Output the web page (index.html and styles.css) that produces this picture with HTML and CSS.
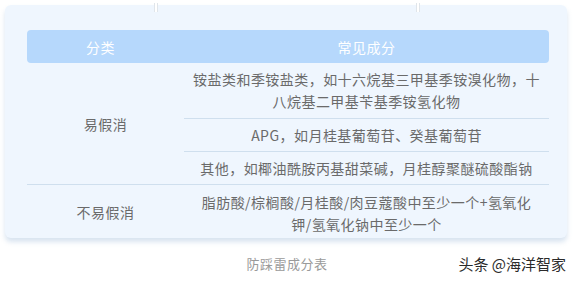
FILE: index.html
```html
<!DOCTYPE html>
<html lang="zh">
<head>
<meta charset="utf-8">
<link rel="stylesheet" href="styles.css">
</head>
<body>
<div class="page">
  <div class="card">
    <span class="pin pin-a"></span>
    <span class="pin pin-b"></span>
    <div class="head">
      <div class="hcell">分类</div>
      <div class="hcell">常见成分</div>
    </div>
    <div class="row">
      <div class="cat">易假消</div>
      <div class="items">
        <div class="item">铵盐类和季铵盐类，如十六烷基三甲基季铵溴化物，十<br>八烷基二甲基苄基季铵氢化物</div>
        <div class="item">APG，如月桂基葡萄苷、癸基葡萄苷</div>
        <div class="item">其他，如椰油酰胺丙基甜菜碱，月桂醇聚醚硫酸酯钠</div>
      </div>
    </div>
    <div class="row row-last">
      <div class="cat">不易假消</div>
      <div class="items">
        <div class="item item-b">脂肪酸/棕榈酸/月桂酸/肉豆蔻酸中至少一个+氢氧化<br>钾/氢氧化钠中至少一个</div>
      </div>
    </div>
  </div>
  <div class="caption">防踩雷成分表</div>
  <div class="mark">头条 @海洋智家</div>
</div>
</body>
</html>
```
FILE: styles.css
```css
html, body {
  margin: 0;
  padding: 0;
  background: #ffffff;
}
body {
  font-family: "Noto Sans CJK SC", "Noto Sans", sans-serif;
  color: #6a6a6a;
  font-size: 14px;
}
.page {
  position: relative;
  width: 574px;
  height: 281px;
  padding-top: 5px;
  box-sizing: border-box;
}
.card {
  position: relative;
  margin: 0 7px 0 5px;
  padding: 25px 18px 0 22px;
  background: #eff6fe;
  border-radius: 6px;
  box-shadow: 0 4px 5px rgba(170, 195, 222, 0.45);
}
.pin {
  position: absolute;
  top: -2px;
  width: 2px;
  height: 9px;
  border-left: 1px solid #e0e5ea;
  border-right: 1px solid #e0e5ea;
  background: #ffffff;
}
.pin-a { left: 149px; }
.pin-b { left: 411px; }
.head {
  display: grid;
  grid-template-columns: 157px 1fr;
  height: 33px;
  background: #b6d8fc;
  border-radius: 4px;
  color: #ffffff;
  align-items: center;
  text-align: center;
  font-size: 14px;
  letter-spacing: 0.5px;
}
.hcell:first-child { padding-right: 10px; }
.row {
  display: grid;
  grid-template-columns: 157px 1fr;
}
.row-last {
  border-top: 1px solid #cfdfee;
}
.cat {
  display: flex;
  align-items: center;
  justify-content: center;
  letter-spacing: 0.5px;
}
.items {
  display: flex;
  flex-direction: column;
}
.item {
  text-align: center;
  line-height: 22px;
  padding: 5px 0;
  letter-spacing: 0.45px;
}
.item:first-child { padding-bottom: 6px; }
.item + .item { border-top: 1px solid #cfdfee; }
.item-b {
  padding: 6px 0 3px;
}
.item-b:first-child { padding-bottom: 3px; }
.caption {
  margin-top: 17px;
  text-align: center;
  font-size: 13px;
  line-height: 18px;
  color: #9a9a9a;
  letter-spacing: 0.5px;
}
.mark {
  position: absolute;
  right: 8px;
  bottom: 7px;
  font-size: 15px;
  line-height: 20px;
  color: #2b2b2b;
  text-shadow: 0 0 2px #ffffff;
}
```
